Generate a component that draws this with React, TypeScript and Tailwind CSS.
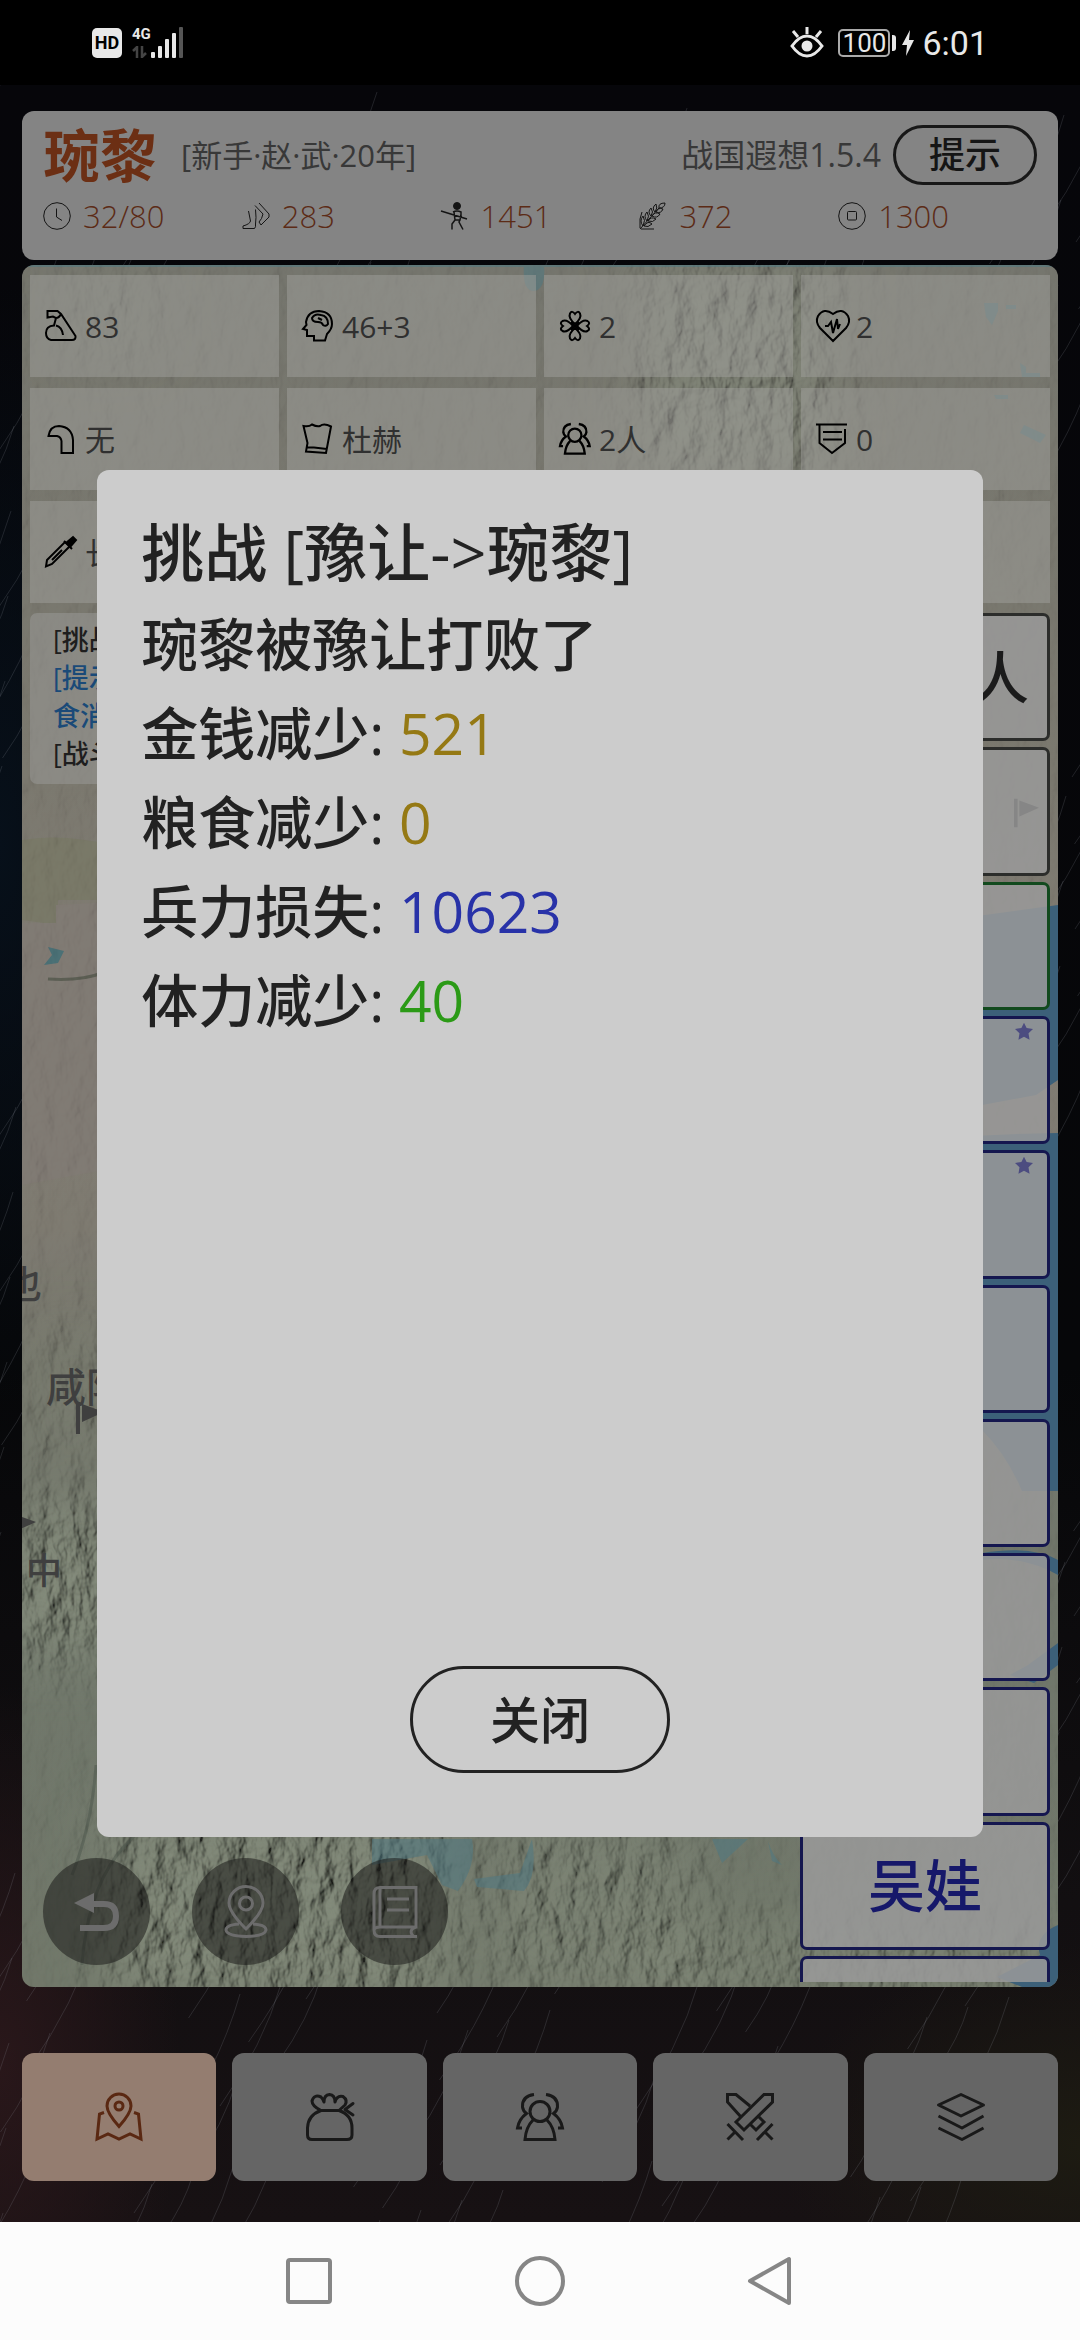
import type { ReactNode } from "react";

const FONT = "font-['Open_Sans','Noto_Sans_CJK_SC',sans-serif]";

type IconProps = { box: number; boxH?: number; className: string; stroke?: number; children: ReactNode };

function Icon({ box, boxH, className, stroke = 2, children }: IconProps) {
  return (
    <svg
      viewBox={`0 0 ${box} ${boxH ?? box}`}
      className={className}
      fill="none"
      stroke="currentColor"
      strokeWidth={stroke}
      overflow="visible"
      aria-hidden="true"
    >
      {children}
    </svg>
  );
}

function PeopleShape() {
  return (
    <>
      <circle cx="24" cy="18.500" r="10" />
      <path d="M17 27Q10 34 9 46.500H39Q38 34 31 27M18 1.500Q6 3 6.500 14Q7 18 10.500 20.500Q3 26 1.500 35H6M30 1.500Q42 3 41.500 14Q41 18 37.500 20.500Q45 26 46.500 35H42" />
    </>
  );
}

const resources = [
  {
    value: "32/80",
    icon: (
      <>
        <circle cx="14" cy="14" r="13.300" />
        <path d="M13.500 6.500V15L19 18.500" />
      </>
    ),
  },
  {
    value: "283",
    icon: (
      <path d="M6.500 9L8.500 19Q8 22 1 24V26.500H12.500Q14 25 13.500 22Q14.500 16 13.500 7.500M13 3.500L21 12Q20 17 17 20L19 23L27 15V12L17 1" />
    ),
  },
  {
    value: "1451",
    icon: (
      <>
        <circle cx="16" cy="4" r="3.500" fill="currentColor" />
        <path d="M0 9L26 17M12 10Q16 8 20 10L20 16M13 10L14 18H19L20 12M14 18L11 22V27.500M19 18L18 20L22 27.500" strokeWidth="1.500" />
      </>
    ),
  },
  {
    value: "372",
    icon: (
      <path d="M1 27L20 6M20 6Q19 1 26 1Q26 6 20 6M16 10Q12 6 17 2Q19 6 16 10M17 10Q22 12 24 7Q19 5 17 10M12 14Q8 10 12 6Q15 10 12 14M13 14Q18 17 21 12Q16 9 13 14M8 19Q4 14 8 10Q11 14 8 19M9 19Q14 21 17 17Q12 14 9 19M4 24Q0 19 4 14Q7 18 4 24M5 24Q9 26 13 22Q9 18 5 24M1 26Q0 16 3 10M2 27H15" />
    ),
  },
  {
    value: "1300",
    icon: (
      <>
        <circle cx="14" cy="14" r="13.300" />
        <rect x="9.500" y="9.500" width="9" height="8.500" rx="1" />
      </>
    ),
  },
];

const heart = "M16 14Q9 8 11 3.500Q13 0 16 4Q19 0 21 3.500Q23 8 16 14Z";

const stats: { value: string; icon: ReactNode }[] = [
  {
    value: "83",
    icon: (
      <path d="M2.500 1H12.500L16 4L30.500 26Q31 30 27 30H6Q1 29 1 23Q1 16 9 15.500L11 8L8 6.500L2.500 7.500ZM11 8Q14 8 16 4M11 15.500Q17 17 18 25" />
    ),
  },
  {
    value: "46+3",
    icon: (
      <>
        <path d="M4 12Q6 1 17 1Q30 2 30 14Q30 19 25 24L23 30.500H12V26H5V20L1 19L4.500 15Z" />
        <path d="M10 8Q13 3 19 5Q26 6 26 14Q24 17 21 15Q20 12 16 12Q10 12 10 8ZM16 8L20 10" />
      </>
    ),
  },
  {
    value: "2",
    icon: (
      <>
        <path d={heart} />
        <path d={heart} transform="rotate(90 16 16)" />
        <path d={heart} transform="rotate(180 16 16)" />
        <path d={heart} transform="rotate(270 16 16)" />
        <path d="M12 12L20 20M20 12L12 20" />
      </>
    ),
  },
  {
    value: "2",
    icon: (
      <path d="M17 31L4 18Q-1 12 2 6Q8-3 17 4Q26-3 32 6Q35 12 30 18ZM9 16H12L15 12L17 23L21 9L22 19L24 14" />
    ),
  },
  {
    value: "无",
    icon: <path d="M3.500 13Q5 3 14 3Q27 4 28 17V30H16.500V18Q16 14 12 13Z" />,
  },
  {
    value: "杜赫",
    icon: (
      <path d="M1.500 3Q7 4 10 1.500Q15 4 18 3Q22 0 29 3.500L24 30L4 28.500L5.500 20ZM4.500 24.500H12L25 26" />
    ),
  },
  {
    value: "2人",
    icon: (
      <g transform="scale(.66)" strokeWidth="3.500">
        <PeopleShape />
      </g>
    ),
  },
  {
    value: "0",
    icon: <path d="M0 1.500H31M3.500 2V20L16 30L29 20V6M7 9H26M7 16.500H26" />,
  },
  {
    value: "长",
    icon: (
      <>
        <path d="M1 30.500L2 24L20 6L25 10L7 28ZM17 14L7 24" />
        <path d="M19 5L27 13M21 7L28 1L31 4L25 11Z" fill="currentColor" />
      </>
    ),
  },
  { value: "", icon: null },
  { value: "", icon: null },
  { value: "", icon: null },
];

const cards: { tone: "dark" | "green" | "blue"; name: string; star?: boolean }[] = [
  { tone: "dark", name: "人" },
  { tone: "dark", name: "" },
  { tone: "green", name: "" },
  { tone: "blue", name: "", star: true },
  { tone: "blue", name: "", star: true },
  { tone: "blue", name: "" },
  { tone: "blue", name: "" },
  { tone: "blue", name: "" },
  { tone: "blue", name: "" },
  { tone: "blue", name: "吴娃" },
  { tone: "blue", name: "" },
];

const toneClass = {
  dark: "border-[#2c2d2b] text-[#1b1b1b] justify-end pr-[18px]",
  green: "border-[#124a1e] justify-center",
  blue: "border-[#15174f] text-[#16186a] justify-center",
};

const results = [
  { label: "金钱减少: ", value: "521", color: "text-[#957914]" },
  { label: "粮食减少: ", value: "0", color: "text-[#957914]" },
  { label: "兵力损失: ", value: "10623", color: "text-[#2832a8]" },
  { label: "体力减少: ", value: "40", color: "text-[#2b9a16]" },
];

function StatusBar() {
  return (
    <header className="flex h-[85px] items-center justify-between bg-black pr-[92px] pl-[92px] font-['Roboto',sans-serif] text-[#e8e8e8]">
      <div className="flex items-center gap-[10px]">
        <span className="flex size-[30px] items-center justify-center rounded-[5px] bg-[#e8e8e8] text-[18px] font-bold text-black">
          HD
        </span>
        <span className="flex items-end">
          <span className="flex h-[31px] w-[19px] flex-col justify-between">
            <span className="text-[15px] leading-[14px] font-bold">4G</span>
            <svg viewBox="0 0 16 12" className="h-[12px] w-[16px]" fill="none" stroke="#444" strokeWidth="2.500" aria-hidden="true">
              <path d="M5 12V1L1 5M10 0V11L14 7" />
            </svg>
          </span>
          <svg viewBox="0 0 32 31" className="h-[31px] w-[32px]" aria-hidden="true">
            <g fill="#e8e8e8">
              <rect x="0" y="25" width="4" height="6" rx="1" />
              <rect x="7" y="19" width="4" height="12" rx="1" />
              <rect x="14" y="12" width="4" height="19" rx="1" />
              <rect x="21" y="6" width="4" height="25" rx="1" />
            </g>
            <rect x="28" y="0" width="4" height="31" rx="1" fill="#555" />
          </svg>
        </span>
      </div>
      <div className="flex items-center">
        <Icon box={34} className="size-[34px]" stroke={3}>
          <path d="M17 1V8M3 5L8 11M31 5L26 11M2 20Q9 10 17 10Q25 10 32 20Q25 30 17 30Q9 30 2 20Z" />
          <circle cx="17" cy="20" r="5.500" fill="currentColor" stroke="none" />
        </Icon>
        <span className="ml-[14px] flex h-[28px] w-[52px] items-center justify-center rounded-[5px] border-2 border-[#aaa] text-[26px] leading-none">
          100
        </span>
        <span className="ml-[2px] h-[16px] w-[4px] rounded-r-[3px] bg-[#e8e8e8]" />
        <svg viewBox="0 0 12 26" className="ml-[6px] h-[26px] w-[12px]" fill="#e8e8e8" aria-hidden="true">
          <path d="M8 0L0 15H5L4 26L12 10H7Z" />
        </svg>
        <span className="ml-[8px] text-[34px] leading-none">6:01</span>
      </div>
    </header>
  );
}

function Streaks() {
  const lines = Array.from({ length: 420 }, (_, i) => {
    const x = (i * 137) % 1187;
    const y = (i * 311) % 2213;
    const len = 50 + ((i * 53) % 110);
    return `M${x} ${y}q${-len / 7} ${len / 2} ${-len / 2} ${len}`;
  }).join("");
  return (
    <svg viewBox="0 0 1080 2137" preserveAspectRatio="xMidYMid slice" className="absolute inset-0 size-full" aria-hidden="true">
      <defs>
        <linearGradient id="night" x1="0" y1="0" x2="0" y2="1">
          <stop offset="0" stopColor="#06060a" />
          <stop offset="0.600" stopColor="#060709" />
          <stop offset="0.850" stopColor="#120f11" />
          <stop offset="1" stopColor="#171113" />
        </linearGradient>
        <radialGradient id="ember">
          <stop offset="0" stopColor="#29171a" />
          <stop offset="1" stopColor="#29171a" stopOpacity="0" />
        </radialGradient>
        <radialGradient id="deep">
          <stop offset="0" stopColor="#07101a" />
          <stop offset="1" stopColor="#07101a" stopOpacity="0" />
        </radialGradient>
        <radialGradient id="moss">
          <stop offset="0" stopColor="#1d1b12" />
          <stop offset="1" stopColor="#1d1b12" stopOpacity="0" />
        </radialGradient>
      </defs>
      <rect width="1080" height="2137" fill="url(#night)" />
      <ellipse cx="0" cy="760" rx="160" ry="560" fill="url(#deep)" />
      <ellipse cx="0" cy="1980" rx="180" ry="380" fill="url(#ember)" />
      <ellipse cx="1080" cy="2060" rx="300" ry="200" fill="url(#moss)" />
      <path d={lines} stroke="#9aa0aa" strokeWidth="1" fill="none" opacity="0.180" />
    </svg>
  );
}

function MapArt() {
  return (
    <svg viewBox="0 0 1036 1722" preserveAspectRatio="xMidYMid slice" className="absolute inset-0 size-full" aria-hidden="true">
      <defs>
        <linearGradient id="land" x1="0" y1="0" x2="0" y2="1">
          <stop offset="0" stopColor="#75756d" />
          <stop offset="0.300" stopColor="#7b786e" />
          <stop offset="0.420" stopColor="#807b73" />
          <stop offset="0.560" stopColor="#7e7a71" />
          <stop offset="0.640" stopColor="#74756a" />
          <stop offset="0.800" stopColor="#6f766a" />
          <stop offset="1" stopColor="#707769" />
        </linearGradient>
        <filter id="relief" x="0" y="0" width="100%" height="100%">
          <feTurbulence type="fractalNoise" baseFrequency="0.050 0.030" numOctaves="4" seed="11" result="n" />
          <feDiffuseLighting in="n" surfaceScale="9" diffuseConstant="1" lightingColor="#88907f">
            <feDistantLight azimuth="200" elevation="50" />
          </feDiffuseLighting>
        </filter>
        <filter id="soft" x="-30%" y="-30%" width="160%" height="160%">
          <feGaussianBlur stdDeviation="28" />
        </filter>
        <mask id="rough">
          <rect width="1036" height="1722" fill="#101010" />
          <g fill="#fff" filter="url(#soft)">
            <rect x="-20" y="1240" width="130" height="150" opacity="0.800" />
            <rect x="90" y="1540" width="330" height="200" opacity="0.750" />
            <rect x="470" y="1560" width="200" height="170" opacity="0.450" />
            <rect x="620" y="1660" width="420" height="80" opacity="0.450" />
            <rect x="620" y="0" width="190" height="220" opacity="0.500" />
            <rect x="50" y="10" width="80" height="80" opacity="0.200" />
            <rect x="0" y="1060" width="100" height="140" opacity="0.200" />
          </g>
        </mask>
      </defs>
      <rect width="1036" height="1722" fill="url(#land)" />
      <path d="M0 575Q40 568 90 580V635H36V660L0 655Z" fill="#797867" />
      <path d="M0 658H34V640L110 636V900L0 920Z" fill="#807a74" />
      <path d="M22 700L30 690L26 682L42 686L36 698Z" fill="#486f76" />
      <path d="M26 714Q60 716 80 708" stroke="#5a5c52" strokeWidth="3" fill="none" />
      <rect width="1036" height="1722" filter="url(#relief)" mask="url(#rough)" />
      <g fill="#3c6079">
        <path d="M780 715Q850 690 890 660L1036 640V815L1014 830L960 840Q860 850 780 880Z" />
        <path d="M780 890Q900 870 1036 868V1226H1000Q985 1190 960 1165L900 1130L780 1140Z" />
        <path d="M960 1288Q1010 1280 1036 1295V1310Q1000 1290 960 1295ZM1036 1400L1012 1418L988 1410L1006 1400L1036 1378Z" />
        <path d="M1036 1660Q1012 1670 1018 1690L975 1712L1000 1722H1036Z" />
      </g>
      <g fill="#4f7882" opacity="0.550">
        <path d="M350 1574H450Q455 1600 436 1626L420 1620L405 1590L350 1600Z" />
        <path d="M510 1574Q516 1610 502 1626L455 1622L452 1614L498 1608Z" />
        <path d="M690 1574H726L700 1598ZM746 1576Q750 1590 760 1600L750 1596Z" />
        <path d="M502 0H522Q524 24 512 26Q500 26 502 0ZM0 0H1036V2H0Z" />
        <path d="M962 38h14v8l-6 14l-6-8zM984 40h10v4h-10zM998 98l6 4v6h14v4h-18zM1002 160l22 10l-6 8l-20-10zM972 130h14v4h-12z" />
      </g>
      <path d="M60 1700Q70 1560 180 1540M50 1610Q70 1560 74 1500" stroke="#4c564b" strokeWidth="3" fill="none" opacity="0.500" />
    </svg>
  );
}

function Flag({ className }: { className: string }) {
  return (
    <svg viewBox="0 0 28 32" className={className} fill="currentColor" aria-hidden="true">
      <path d="M0 0H4V32H0ZM6 2L28 10L6 20Z" />
    </svg>
  );
}

function Header() {
  return (
    <section className="relative mx-[22px] rounded-[12px] bg-[#848484] px-[21px] pt-[14px] pb-[25px]">
      <div className="flex h-[60px] items-center">
        <h1 className="text-[57px] leading-[60px] font-bold text-[#6c2f14]">琬黎</h1>
        <span className="ml-[24px] text-[31px] text-[#383838]">[新手·赵·武·20年]</span>
        <span className="mr-[12px] ml-auto text-[32px] text-[#383838]">战国遐想1.5.4</span>
        <button className="h-[60px] w-[144px] rounded-full border-[3px] border-[#181818] text-[36px] leading-none font-medium text-[#151515]">
          提示
        </button>
      </div>
      <ul className="mt-[12px] grid grid-cols-5">
        {resources.map((r) => (
          <li key={r.value} className="flex h-[38px] items-center gap-[12px] text-[31px] font-light text-[#5c2b16]">
            <Icon box={28} stroke={1} className="size-[28px] text-[#141414]">
              {r.icon}
            </Icon>
            {r.value}
          </li>
        ))}
      </ul>
    </section>
  );
}

function MapPanel() {
  return (
    <section className="relative mx-[22px] mt-[5px] flex flex-1 flex-col overflow-hidden rounded-[12px] px-[8px] pt-[10px] pb-[5px]">
      <MapArt />
      <div className="absolute inset-0 text-[#3f3f3f]">
        <span className="absolute top-[996px] left-[-18px] text-[38px] leading-[44px] font-medium">也</span>
        <span className="absolute top-[1100px] left-[24px] text-[40px] leading-[44px] font-medium">咸阳</span>
        <Flag className="absolute top-[1137px] left-[54px] h-[32px] w-[28px]" />
        <Flag className="absolute top-[1247px] left-[-14px] h-[32px] w-[28px]" />
        <span className="absolute top-[1284px] left-[4px] text-[36px] leading-[44px] font-medium">中</span>
      </div>
      <div className="relative grid grid-cols-4 gap-x-[8px] gap-y-[11px]">
        {stats.map((s, i) => (
          <div key={i} className="flex h-[102px] items-center gap-[8px] bg-[#a0a09c]/50 px-[15px] text-[30px] text-[#303030]">
            {s.icon && (
              <Icon box={32} className="size-[32px] text-black">
                {s.icon}
              </Icon>
            )}
            {s.value}
          </div>
        ))}
      </div>
      <div className="relative mt-[10px] flex flex-1 gap-[8px]">
        <div className="flex flex-1 flex-col items-stretch justify-between pb-[17px]">
          <div className="rounded-[7px] bg-[#9c9c9a]/50 px-[23px] pt-[8px] pb-[11px] text-[27px] leading-[38px] font-medium text-[#1e1e1e]">
            <p>[挑战]</p>
            <p className="text-[#1a4a78]">[提示]</p>
            <p className="text-[#1a4a78]">食消</p>
            <p>[战斗]</p>
          </div>
          <div className="flex gap-[42px] pl-[13px]">
            <button aria-label="返回" className="flex size-[107px] items-center justify-center rounded-full bg-[#1c1c1a]/55 text-[#6c6c6c]">
              <Icon box={46} boxH={38} stroke={6} className="h-[38px] w-[46px]">
                <path d="M16 11H30Q42 11 42 23Q42 35 30 35H6" />
                <path d="M0 10L20 0V20Z" fill="currentColor" stroke="none" />
              </Icon>
            </button>
            <button aria-label="定位" className="flex size-[107px] items-center justify-center rounded-full bg-[#1c1c1a]/55 text-[#6c6c6c]">
              <Icon box={42} boxH={52} stroke={3} className="h-[52px] w-[42px]">
                <path d="M21 43Q4 26 4 17A17 16.500 0 0 1 38 17Q38 26 21 43ZM14 38Q1 39 1 44Q2 50 21 50.500Q40 50 41 44Q41 39 28 38" />
                <circle cx="21" cy="17.500" r="6.500" />
              </Icon>
            </button>
            <button aria-label="记录" className="flex size-[107px] items-center justify-center rounded-full bg-[#1c1c1a]/55 text-[#6c6c6c]">
              <Icon box={46} boxH={52} stroke={3} className="h-[52px] w-[46px]">
                <path d="M8 1.500H44V41H8V1.500Q2 1.500 2 8V44Q2 50.500 8 50.500H45M2 44Q3 41 8 41M44 41Q36 44 41 50M15 13H37M15 24H37" />
              </Icon>
            </button>
          </div>
        </div>
        <div className="grid w-[250px] grid-rows-[repeat(10,minmax(0,1fr))_26px] gap-[6px] overflow-hidden">
          {cards.map((c, i) => (
            <button
              key={i}
              aria-label={c.name || "人物"}
              className={`relative flex min-h-0 items-center overflow-hidden border-[3px] bg-[#9a9a9a]/85 text-[57px] leading-none font-medium ${
                i === 10 ? "rounded-t-[7px] border-b-0" : "rounded-[7px]"
              } ${toneClass[c.tone]}`}
            >
              {c.name}
              {c.star && (
                <svg viewBox="0 0 24 24" className="absolute top-[3px] right-[14px] size-[18px]" fill="#4c4c80" aria-hidden="true">
                  <path d="M12 1L15.500 8L24 9.300L18 15L19.400 23.500L12 19.500L4.600 23.500L6 15L0 9.300L8.500 8Z" />
                </svg>
              )}
              {i === 1 && <Flag className="absolute top-[48px] right-[8px] h-[30px] w-[25px] text-[#868686]" />}
            </button>
          ))}
        </div>
      </div>
    </section>
  );
}

const tabs = [
  {
    label: "地图",
    icon: (
      <>
        <path d="M24 33.500Q12 20 12 13A12 12 0 0 1 36 13Q36 20 24 33.500ZM9 19.500L4.500 21L2 46L13 41L24 46L35 41L46 46L43.500 21L39 19.500" />
        <circle cx="24" cy="13" r="4" />
      </>
    ),
  },
  {
    label: "背包",
    icon: (
      <path
        strokeLinejoin="round"
        strokeLinecap="round"
        d="M15 17.500Q6 13 6 8Q8 1 15 4Q17 6 18 9Q18 2 23.500 1.500Q29 2 29 9Q31 2 37 3.500Q42 7 39 12L33 17.500M15 17.500H33Q46 22 46 35V42Q46 46.500 41 46.500H6Q1.500 46.500 1.500 42V35Q2 22 15 17.500ZM47 10.500L39 16.500L47 22"
      />
    ),
  },
  { label: "人物", icon: <PeopleShape /> },
  {
    label: "战斗",
    icon: (
      <path d="M46.500 1.500H38L10 29L18 37L46.500 9ZM1.500 31L17 47M9 39L1.500 46.500M24 13L10 1.500H1.500V9L15 24M32 23L38 29L30 37L24 31M46.500 31L31 47M39 39L46.500 46.500" />
    ),
  },
  {
    label: "更多",
    icon: <path strokeLinejoin="round" d="M24 1.500L46.500 12L24 23L1.500 12ZM1.500 23L25 35L46.500 23M1.500 35L25 46.500L46.500 35" />,
  },
];

function Tabs() {
  return (
    <nav className="relative mx-[22px] mt-[66px] mb-[41px] grid grid-cols-5 gap-[16px]">
      {tabs.map((t, i) => (
        <button
          key={t.label}
          aria-label={t.label}
          className={`flex h-[128px] items-center justify-center rounded-[12px] ${
            i === 0 ? "bg-[#947d70] text-[#5a2812]" : "bg-[#656565] text-[#191919]"
          }`}
        >
          <Icon box={48} stroke={3} className="size-[48px]">
            {t.icon}
          </Icon>
        </button>
      ))}
    </nav>
  );
}

function ResultDialog() {
  return (
    <div className="absolute inset-0 flex items-center justify-center">
      <div
        role="dialog"
        aria-labelledby="result-title"
        className="flex h-[64%] w-[82%] flex-col rounded-[12px] bg-[#cccccc] px-[44px] pt-[36px] pb-[64px] text-[#222222]"
      >
        <h2 id="result-title" className="text-[63px] leading-[92px] font-medium">
          挑战 [豫让-&gt;琬黎]
        </h2>
        <div className="mt-[2px] text-[57px] leading-[89px] font-medium">
          <p>琬黎被豫让打败了</p>
          {results.map((r) => (
            <p key={r.label}>
              {r.label}
              <span className={`font-normal ${r.color}`}>{r.value}</span>
            </p>
          ))}
        </div>
        <button className="mx-auto mt-auto h-[107px] w-[260px] rounded-full border-[3px] border-[#222222] text-[50px] leading-none font-medium">
          关闭
        </button>
      </div>
    </div>
  );
}

function SystemNav() {
  return (
    <footer className="flex h-[118px] items-center justify-center gap-[181px] bg-[#fcfcfc] text-[#868686]">
      <button aria-label="最近任务">
        <Icon box={50} stroke={4} className="size-[50px]">
          <rect x="4" y="4" width="42" height="42" rx="2" />
        </Icon>
      </button>
      <button aria-label="主屏幕">
        <Icon box={50} stroke={4} className="size-[50px]">
          <circle cx="25" cy="25" r="23" />
        </Icon>
      </button>
      <button aria-label="返回上一页">
        <Icon box={50} stroke={4} className="size-[50px]">
          <path strokeLinejoin="round" d="M43 3V47L4 25Z" />
        </Icon>
      </button>
    </footer>
  );
}

export default function App() {
  return (
    <div className={`flex min-h-screen flex-col bg-black ${FONT}`}>
      <StatusBar />
      <main className="relative flex flex-1 flex-col overflow-hidden pt-[26px]">
        <Streaks />
        <Header />
        <MapPanel />
        <Tabs />
        <ResultDialog />
      </main>
      <SystemNav />
    </div>
  );
}
